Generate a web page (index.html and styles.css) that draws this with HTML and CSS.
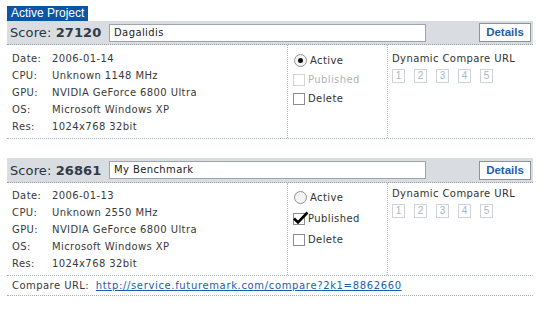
FILE: index.html
```html
<!DOCTYPE html>
<html>
<head>
<meta charset="utf-8">
<link rel="stylesheet" href="styles.css">
</head>
<body>
<div class="tab">Active Project</div>
<section class="project">
  <div class="head">
    <span class="score">Score: <b>27120</b></span>
    <span class="name">Dagalidis</span>
    <span class="details">Details</span>
  </div>
  <div class="body">
    <div class="info">
      <div class="row"><span class="lbl">Date:</span><span>2006-01-14</span></div>
      <div class="row"><span class="lbl">CPU:</span><span>Unknown 1148 MHz</span></div>
      <div class="row"><span class="lbl">GPU:</span><span>NVIDIA GeForce 6800 Ultra</span></div>
      <div class="row"><span class="lbl">OS:</span><span>Microsoft Windows XP</span></div>
      <div class="row"><span class="lbl">Res:</span><span>1024x768 32bit</span></div>
    </div>
    <div class="flags">
      <div class="flag"><span class="radio on"></span>Active</div>
      <div class="flag disabled"><span class="box"></span>Published</div>
      <div class="flag"><span class="box"></span>Delete</div>
    </div>
    <div class="dyn">
      <div class="dyn-title">Dynamic Compare URL</div>
      <div class="slots"><span>1</span><span>2</span><span>3</span><span>4</span><span>5</span></div>
    </div>
  </div>
</section>
<section class="project second">
  <div class="head">
    <span class="score">Score: <b>26861</b></span>
    <span class="name">My Benchmark</span>
    <span class="details">Details</span>
  </div>
  <div class="body">
    <div class="info">
      <div class="row"><span class="lbl">Date:</span><span>2006-01-13</span></div>
      <div class="row"><span class="lbl">CPU:</span><span>Unknown 2550 MHz</span></div>
      <div class="row"><span class="lbl">GPU:</span><span>NVIDIA GeForce 6800 Ultra</span></div>
      <div class="row"><span class="lbl">OS:</span><span>Microsoft Windows XP</span></div>
      <div class="row"><span class="lbl">Res:</span><span>1024x768 32bit</span></div>
    </div>
    <div class="flags">
      <div class="flag"><span class="radio"></span>Active</div>
      <div class="flag"><span class="box checked"><svg width="16" height="14" viewBox="0 0 16 14"><path d="M1 7.5 L5 11.5 L14.5 1.5" fill="none" stroke="#000" stroke-width="2.6"/></svg></span>Published</div>
      <div class="flag"><span class="box"></span>Delete</div>
    </div>
    <div class="dyn">
      <div class="dyn-title">Dynamic Compare URL</div>
      <div class="slots"><span>1</span><span>2</span><span>3</span><span>4</span><span>5</span></div>
    </div>
  </div>
  <div class="compare">Compare URL: <a href="#">http://service.futuremark.com/compare?2k1=8862660</a></div>
</section>
</body>
</html>
```
FILE: styles.css
```css
html, body {
  margin: 0;
  background: #fff;
}
body {
  padding: 6px 17px 0 7px;
  font-family: "DejaVu Sans", Verdana, sans-serif;
  font-size: 10px;
  color: #3a3a3a;
}
.tab {
  display: inline-block;
  background: #0b55a6;
  color: #fff;
  font-family: "Liberation Sans", Arial, sans-serif;
  font-size: 12px;
  line-height: 15px;
  height: 15px;
  padding: 0 4px 0 4px;
  white-space: nowrap;
  vertical-align: top;
}
.project {
  width: 526px;
}
.second {
  margin-top: 19px;
}
.head {
  display: flex;
  align-items: center;
  height: 23px;
  background: #d9dde2;
  border-bottom: 1px dotted #9aa0a6;
  padding-left: 3px;
}
.second .head {
  height: 24px;
}
.score {
  font-size: 13px;
  color: #2a3440;
  width: 99px;
  letter-spacing: 0.1px;
}
.score b {
  font-weight: bold;
  color: #333c46;
}
.name {
  box-sizing: border-box;
  width: 317px;
  height: 18px;
  background: #fff;
  border: 1px solid #9ea4aa;
  font-size: 10px;
  letter-spacing: 0.4px;
  line-height: 16px;
  padding-left: 4px;
  color: #222;
}
.details {
  box-sizing: border-box;
  margin-left: auto;
  margin-right: 2px;
  width: 52px;
  height: 19px;
  background: #fff;
  border: 1px solid #8c949c;
  color: #1f5ea8;
  font-family: "Liberation Sans", Arial, sans-serif;
  font-weight: bold;
  font-size: 11.5px;
  line-height: 17px;
  text-align: center;
}
.body {
  display: flex;
  border-bottom: 1px dotted #a8adb2;
}
.info {
  width: 280px;
  padding: 5px 0 3px 5px;
  box-sizing: border-box;
}
.row {
  display: flex;
  height: 17px;
  line-height: 17px;
  letter-spacing: 0.4px;
  white-space: nowrap;
}
.lbl {
  width: 40px;
  color: #3a3a3a;
}
.flags {
  width: 101px;
  box-sizing: border-box;
  border-left: 1px dotted #b5b9bd;
  border-right: 1px dotted #b5b9bd;
  padding: 6px 0 0 5px;
}
.flag {
  display: flex;
  align-items: center;
  height: 19px;
  letter-spacing: 0.4px;
  color: #333;
}
.flag.disabled {
  color: #b0b4b8;
}
.radio {
  box-sizing: border-box;
  width: 13px;
  height: 13px;
  border-radius: 50%;
  border: 1px solid #8e9296;
  background: #f4f4f4;
  margin: 0 3px 0 1px;
  display: flex;
  align-items: center;
  justify-content: center;
}
.radio.on::after {
  content: "";
  width: 5px;
  height: 5px;
  border-radius: 50%;
  background: #111;
}
.box {
  position: relative;
  box-sizing: border-box;
  width: 12px;
  height: 12px;
  border: 1px solid #8a8e92;
  background: #fff;
  margin-right: 3px;
}
.disabled .box {
  border-color: #d2d5d8;
}
.box svg {
  position: absolute;
  left: -1px;
  top: -3px;
}
.dyn {
  padding: 7px 0 0 4px;
}
.dyn-title {
  letter-spacing: 0.4px;
  line-height: 13px;
  color: #333;
}
.slots {
  display: flex;
  gap: 9px;
  margin-top: 4px;
}
.slots span {
  box-sizing: border-box;
  width: 13px;
  height: 14px;
  border: 1px solid #cdd3d9;
  color: #a9b6c3;
  font-family: "Liberation Sans", Arial, sans-serif;
  font-size: 10px;
  line-height: 12px;
  text-align: center;
}
.second .flags {
  padding-top: 4px;
}
.second .flag {
  height: 21px;
}
.second .dyn {
  padding-top: 4px;
}
.second .info {
  padding-top: 4px;
}
.compare {
  height: 19px;
  line-height: 19px;
  padding-left: 5px;
  letter-spacing: 0.45px;
  border-bottom: 1px dotted #a8adb2;
}
.compare a {
  color: #1a5fb0;
  text-decoration: underline;
  margin-left: 3px;
  letter-spacing: 0.65px;
}
```
